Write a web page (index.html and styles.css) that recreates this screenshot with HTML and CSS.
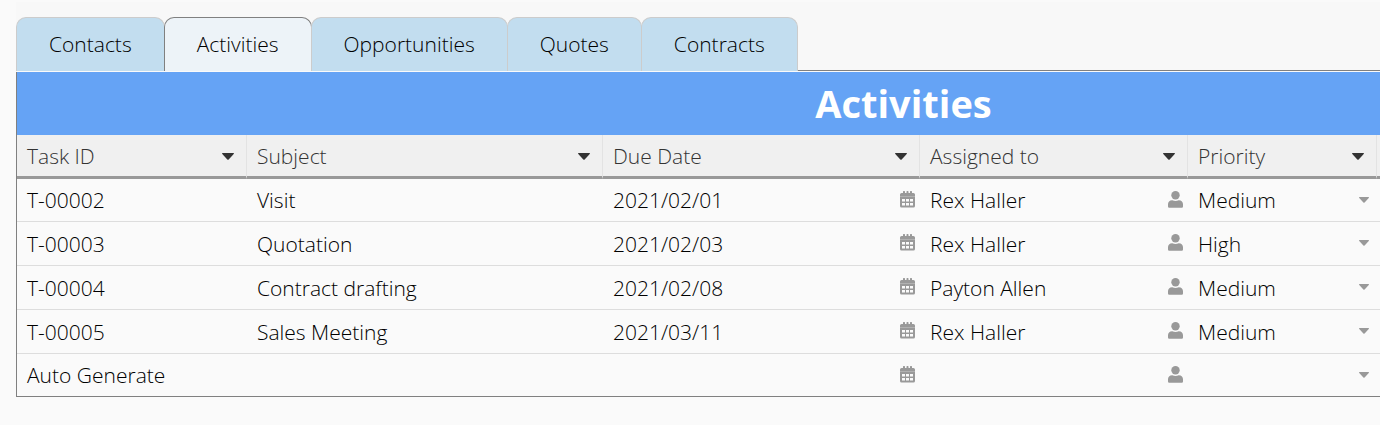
FILE: index.html
```html
<!DOCTYPE html>
<html lang="en">
<head>
<meta charset="utf-8">
<title>Activities</title>
<link rel="stylesheet" href="styles.css">
</head>
<body>
<svg class="sprite" aria-hidden="true">
  <symbol id="calendar" viewBox="0 0 15 17"><path fill-rule="evenodd" d="M3 2V.6Q3 0 3.600 0h.8Q5 0 5 .6V2h1.500V.6q0-.6.600-.6h.8q.6 0 .6.600V2H10V.6q0-.6.600-.6h.8q.6 0 .6.600V2h1.400Q15 2 15 3.600V5.700H0V3.600Q0 2 1.600 2zM0 6h15v8.900q0 1.600-1.600 1.600H1.600Q0 16.500 0 14.900zM2 8v2.500h3V8zm4 0v2.500h3V8zm4 0v2.500h3V8zM2 12v2.500h3V12zm4 0v2.500h3V12zm4 0v2.500h3V12z"/></symbol>
  <symbol id="person" viewBox="0 0 15 17"><circle cx="7.500" cy="4.200" r="4.200"/><path d="M4.300 9.300c2 1 4.400 1 6.400 0C13.600 9.300 15 11 15 13.300v2.200a1.200 1.200 0 0 1-1.200 1.200H1.200A1.200 1.200 0 0 1 0 15.500v-2.200C0 11 1.400 9.300 4.300 9.300z"/></symbol>
  <symbol id="caret" viewBox="0 0 12 7"><path d="M.6 0h10.800q1 .3.300 1.100L6.700 6.500q-.7.700-1.400 0L.300 1.100Q-.4.300.6 0z"/></symbol>
</svg>
<main class="page">
  <div class="tabs" role="tablist">
    <button class="tab" role="tab" type="button">Contacts</button>
    <button class="tab tab-active" role="tab" type="button" aria-selected="true">Activities</button>
    <button class="tab" role="tab" type="button">Opportunities</button>
    <button class="tab" role="tab" type="button">Quotes</button>
    <button class="tab" role="tab" type="button">Contracts</button>
  </div>
  <section class="panel">
    <h1 class="title">Activities</h1>
    <table class="grid">
      <colgroup><col class="col-id"><col class="col-subject"><col class="col-date"><col class="col-person"><col class="col-priority"><col></colgroup>
      <thead>
        <tr>
          <th><div class="head">Task ID<button class="icon-button" type="button" aria-label="Task ID menu"><svg class="caret"><use href="#caret"/></svg></button></div></th>
          <th><div class="head">Subject<button class="icon-button" type="button" aria-label="Subject menu"><svg class="caret"><use href="#caret"/></svg></button></div></th>
          <th><div class="head">Due Date<button class="icon-button" type="button" aria-label="Due Date menu"><svg class="caret"><use href="#caret"/></svg></button></div></th>
          <th><div class="head">Assigned to<button class="icon-button" type="button" aria-label="Assigned to menu"><svg class="caret"><use href="#caret"/></svg></button></div></th>
          <th><div class="head">Priority<button class="icon-button" type="button" aria-label="Priority menu"><svg class="caret"><use href="#caret"/></svg></button></div></th>
          <th></th>
        </tr>
      </thead>
      <tbody>
        <tr>
          <td>T-00002</td><td>Visit</td>
          <td><div class="cell">2021/02/01<button class="icon-button" type="button" aria-label="Pick date"><svg class="calendar"><use href="#calendar"/></svg></button></div></td>
          <td><div class="cell">Rex Haller<button class="icon-button" type="button" aria-label="Pick person"><svg class="person"><use href="#person"/></svg></button></div></td>
          <td><div class="cell">Medium<button class="icon-button" type="button" aria-label="Pick priority"><svg class="caret-small"><use href="#caret"/></svg></button></div></td><td></td>
        </tr>
        <tr>
          <td>T-00003</td><td>Quotation</td>
          <td><div class="cell">2021/02/03<button class="icon-button" type="button" aria-label="Pick date"><svg class="calendar"><use href="#calendar"/></svg></button></div></td>
          <td><div class="cell">Rex Haller<button class="icon-button" type="button" aria-label="Pick person"><svg class="person"><use href="#person"/></svg></button></div></td>
          <td><div class="cell">High<button class="icon-button" type="button" aria-label="Pick priority"><svg class="caret-small"><use href="#caret"/></svg></button></div></td><td></td>
        </tr>
        <tr>
          <td>T-00004</td><td>Contract drafting</td>
          <td><div class="cell">2021/02/08<button class="icon-button" type="button" aria-label="Pick date"><svg class="calendar"><use href="#calendar"/></svg></button></div></td>
          <td><div class="cell">Payton Allen<button class="icon-button" type="button" aria-label="Pick person"><svg class="person"><use href="#person"/></svg></button></div></td>
          <td><div class="cell">Medium<button class="icon-button" type="button" aria-label="Pick priority"><svg class="caret-small"><use href="#caret"/></svg></button></div></td><td></td>
        </tr>
        <tr>
          <td>T-00005</td><td>Sales Meeting</td>
          <td><div class="cell">2021/03/11<button class="icon-button" type="button" aria-label="Pick date"><svg class="calendar"><use href="#calendar"/></svg></button></div></td>
          <td><div class="cell">Rex Haller<button class="icon-button" type="button" aria-label="Pick person"><svg class="person"><use href="#person"/></svg></button></div></td>
          <td><div class="cell">Medium<button class="icon-button" type="button" aria-label="Pick priority"><svg class="caret-small"><use href="#caret"/></svg></button></div></td><td></td>
        </tr>
        <tr>
          <td>Auto Generate</td><td></td>
          <td><div class="cell"><button class="icon-button" type="button" aria-label="Pick date"><svg class="calendar"><use href="#calendar"/></svg></button></div></td>
          <td><div class="cell"><button class="icon-button" type="button" aria-label="Pick person"><svg class="person"><use href="#person"/></svg></button></div></td>
          <td><div class="cell"><button class="icon-button" type="button" aria-label="Pick priority"><svg class="caret-small"><use href="#caret"/></svg></button></div></td><td></td>
        </tr>
      </tbody>
    </table>
  </section>
</main>
</body>
</html>
```
FILE: styles.css
```css
* { box-sizing: border-box; }
body {
  margin: 0;
  background: #fafafa;
  color: #000;
  font: 300 21px/28px "Open Sans", sans-serif;
}
.sprite { display: none; }
.page { padding: 2px 0 28px 16px; overflow: hidden; }
.tabs {
  display: flex;
  padding-top: 15px;
  background: #f8f8f8;
  box-shadow: inset 0 -1px #808080;
}
.tab {
  height: 54px;
  margin-right: -1px;
  padding: 0 32px 2px;
  border: 1px solid #ccc;
  border-bottom: 0;
  border-radius: 10px 10px 0 0;
  background: #c2ddef;
  color: #000;
  font: inherit;
}
.tab-active { border-color: #808080; background: #edf3f8; }
.panel {
  min-width: 1775px;
  margin-top: 1px;
  border: 1px solid #808080;
  border-top: 0;
}
.title {
  margin: 0;
  height: 63px;
  background: #65a3f5;
  color: #fff;
  font-size: 38px;
  font-weight: 700;
  line-height: 63px;
  text-align: center;
}
.grid { width: 100%; border-collapse: separate; border-spacing: 0; table-layout: fixed; }
.col-id { width: 230px; }
.col-subject { width: 356px; }
.col-date { width: 317px; }
.col-person { width: 268px; }
.col-priority { width: 189px; }
th {
  height: 44px;
  padding: 0 12px 0 10px;
  border-right: 1px solid #e3e3e3;
  border-bottom: 3px solid #999;
  background: #f0f0f0;
  color: #333;
  font-weight: 300;
  text-align: left;
}
td { height: 44px; padding: 0 5px 0 10px; border-bottom: 1px solid #ddd; }
tbody tr:first-child td { height: 43px; }
tbody tr:last-child td { height: 42px; border-bottom: 0; }
.head, .cell { display: flex; align-items: center; min-height: 28px; }
.icon-button {
  display: flex;
  margin-left: auto;
  padding: 0;
  border: 0;
  background: none;
  color: #999;
}
.icon-button svg { fill: currentColor; }
.head .icon-button { color: #333; }
.head .icon-button { padding-top: 2px; }
.caret { width: 12px; height: 7px; }
.calendar { width: 15px; height: 17px; margin-bottom: 2px; }
.person { width: 15px; height: 17px; margin-bottom: 2px; }
.caret-small { width: 10px; height: 6px; margin: 0 3px 1px 0; }
```
